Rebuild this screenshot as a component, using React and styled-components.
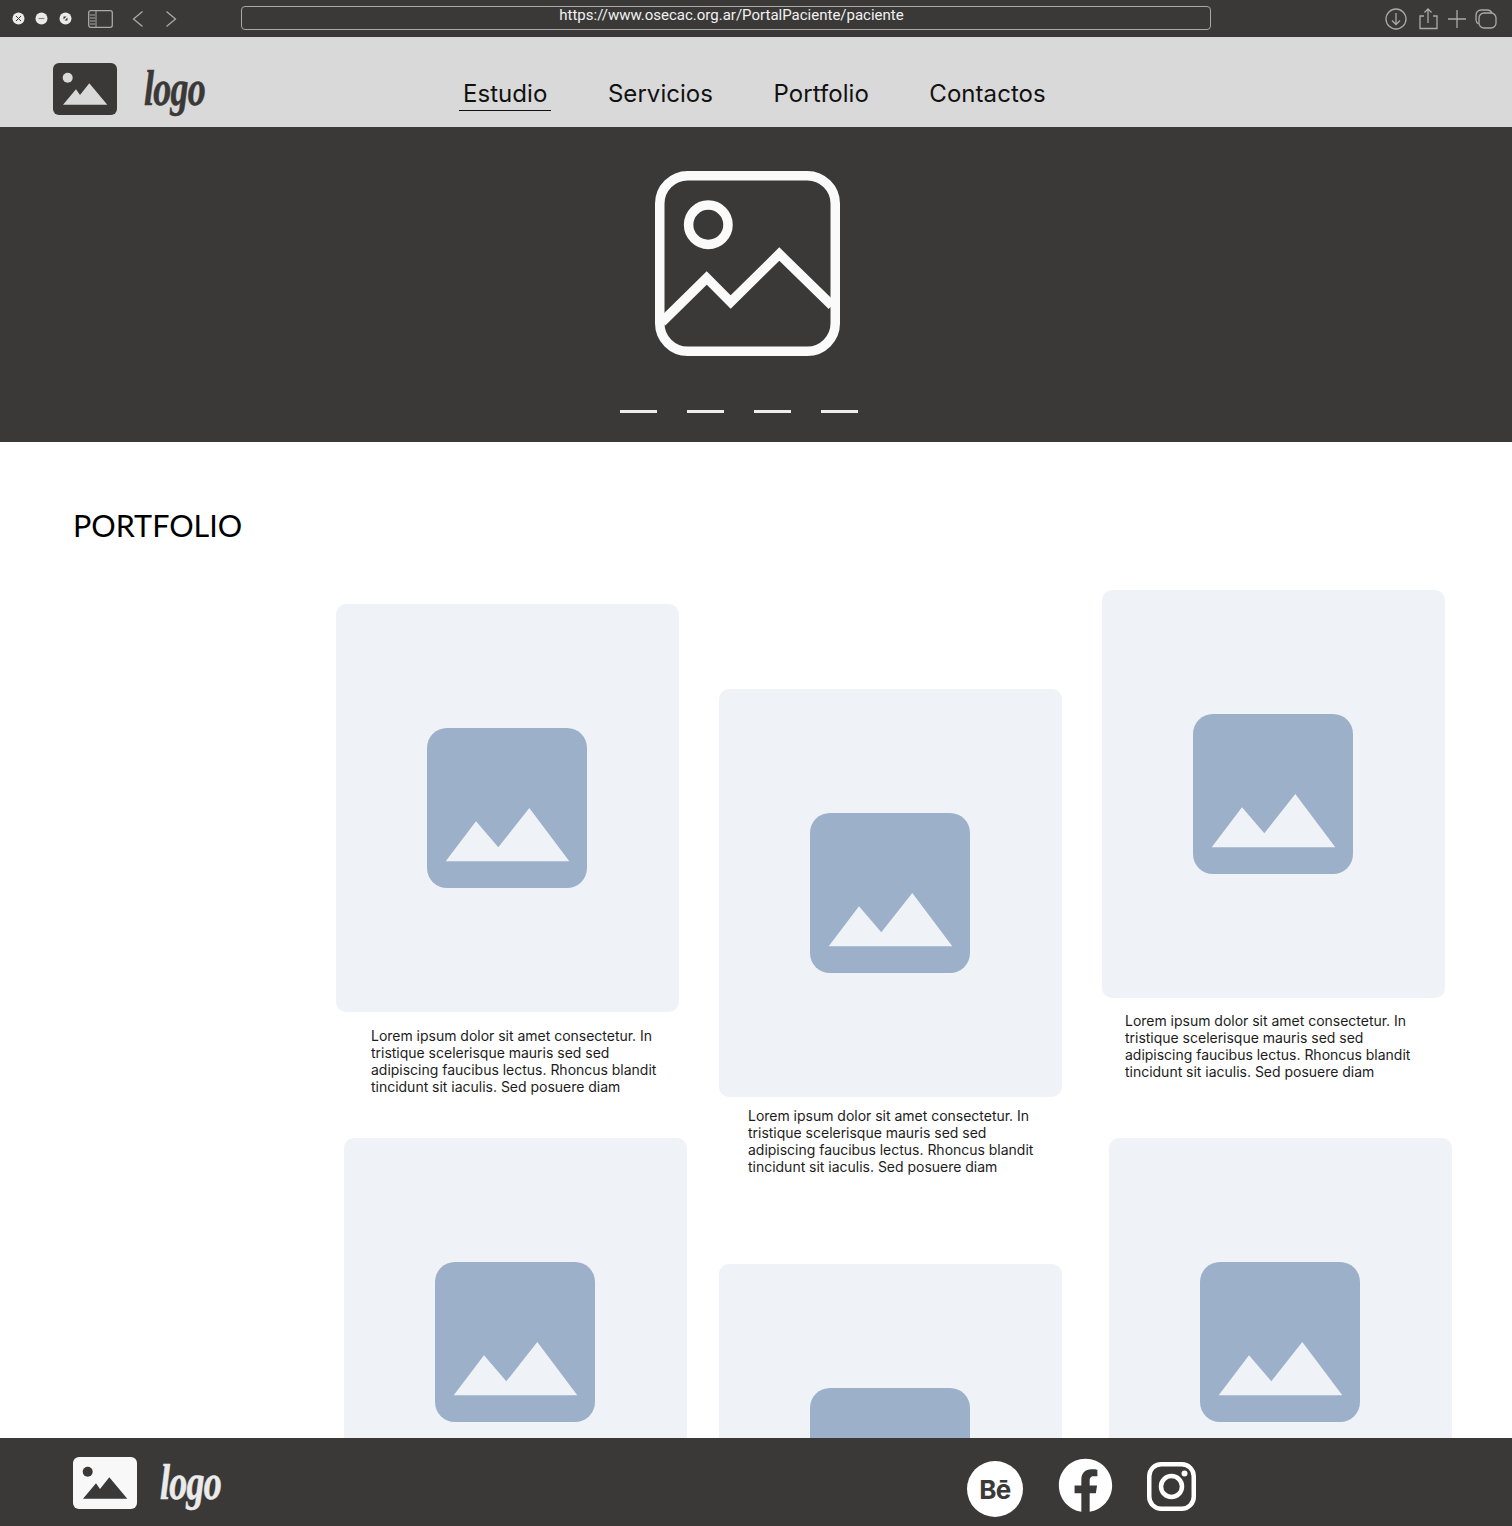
import styled, { createGlobalStyle } from 'styled-components'
import { FaFacebook } from 'react-icons/fa'

const GlobalStyle = createGlobalStyle`
  html, body {
    margin: 0;
    padding: 0;
    background: #fff;
  }
  body {
    font-family: Inter, "Noto Sans", sans-serif;
  }
`

const Page = styled.div`
  width: 1512px;
  height: 1526px;
  display: flex;
  flex-direction: column;
  overflow: hidden;
`

// browser chrome
const BrowserBar = styled.div`
  height: 37px;
  flex: none;
  background: #3a3938;
  display: flex;
  align-items: center;
  padding-left: 12px;
  color: #aaa9a8;
`

const Dots = styled.div`
  display: flex;
  gap: 9.5px;
`

const Dot = styled.svg`
  width: 13px;
  height: 13px;
  display: block;
  margin-left: ${props => props.$left || 0}px;
`

const ChromeIcon = styled.svg`
  display: block;
  flex: none;
  margin-left: ${props => props.$left || 0}px;
  fill: none;
  stroke: currentColor;
  stroke-width: 1.3;
`

const UrlBox = styled.div`
  width: 970px;
  height: 24px;
  box-sizing: border-box;
  margin-left: 64px;
  margin-top: -1px;
  border: 1.5px solid #a9a8a7;
  border-radius: 4px;
  text-align: center;
  padding-left: 11px;
  font-family: Roboto, sans-serif;
  font-size: 15px;
  line-height: 16px;
  color: #f1f1f1;
`

// site header
const Header = styled.header`
  height: 90px;
  flex: none;
  background: #d9d9d9;
  display: flex;
  align-items: flex-start;
  padding-left: 53px;
`

const Brand = styled.div`
  display: flex;
  align-items: flex-start;
  gap: 27px;
  width: 152px;
  flex: none;
  padding-top: 26px;
  color: ${props => props.$color};
`

const BrandMark = styled.svg`
  width: 64px;
  height: 52px;
  display: block;
  flex: none;
`

const BrandName = styled.span`
  font-family: "Liberation Serif", serif;
  font-style: italic;
  font-weight: 700;
  font-size: 50px;
  line-height: 50px;
  letter-spacing: -1px;
  transform: scaleX(0.72);
  transform-origin: left top;
  -webkit-text-stroke: 0.6px currentColor;
`

const Nav = styled.nav`
  display: flex;
  gap: 52.5px;
  margin-left: 254px;
  padding-top: 42px;
`

const NavLink = styled.a`
  display: block;
  padding: 0 4px 2px;
  font-size: 24px;
  line-height: 29px;
  letter-spacing: 0.05px;
  color: #111;
  text-decoration: none;
  border-bottom: 1px solid ${props => (props.$active ? '#111' : 'transparent')};
`

// hero
const Hero = styled.section`
  height: 315px;
  flex: none;
  box-sizing: border-box;
  background: #3a3938;
  padding: 44px 17px 0 0;
  display: flex;
  flex-direction: column;
  align-items: center;
`

const HeroIcon = styled.svg`
  width: 185px;
  height: 185px;
  display: block;
  fill: none;
  stroke: #fafafa;
  stroke-width: 9.5;
  stroke-linejoin: miter;
`

const Pager = styled.div`
  display: flex;
  gap: 30px;
  margin-top: 54px;
  margin-left: -17px;
`

const PagerDash = styled.span`
  width: 37px;
  height: 3px;
  background: #efeeec;
`

// portfolio
const Main = styled.main`
  flex: 1;
  min-height: 0;
  overflow: hidden;
  background: #fff;
`

const Title = styled.h1`
  margin: 0;
  padding: 63px 0 0 73px;
  height: 85px;
  font-family: Lato, sans-serif;
  font-weight: 400;
  font-size: 30.5px;
  line-height: 40px;
  color: #000;
`

const Gallery = styled.div`
  display: flex;
  align-items: flex-start;
  padding-left: 336px;
`

const Column = styled.div`
  display: flex;
  flex-direction: column;
  flex: none;
  width: ${props => props.$width}px;
  margin-top: ${props => props.$top}px;
`

const Item = styled.figure`
  margin: ${props => props.$gap || 0}px 0 0 ${props => props.$shift || 0}px;
`

const Thumb = styled.div`
  width: 343px;
  height: 408px;
  box-sizing: border-box;
  padding-right: 1px;
  border-radius: 10px;
  background: #eff2f7;
  display: flex;
  align-items: center;
  justify-content: center;
`

const ThumbIcon = styled.svg`
  width: 160px;
  height: 160px;
  display: block;
`

const Caption = styled.figcaption`
  width: 300px;
  margin: ${props => props.$top}px 0 0 ${props => props.$left}px;
  font-size: 14px;
  line-height: 17px;
  letter-spacing: -0.015px;
  color: #1c1c1c;
`

// footer
const Footer = styled.footer`
  height: 88px;
  flex: none;
  background: #3a3938;
  display: flex;
  align-items: flex-start;
  padding-left: 73px;
`

const FooterBrand = styled(Brand)`
  padding-top: 19px;
  gap: 23px;
  width: auto;
`

const Socials = styled.div`
  margin-left: auto;
  margin-right: 316px;
  display: flex;
  align-items: flex-start;
  gap: 34.5px;
  color: #fff;
`

const BehanceBadge = styled.a`
  width: 56px;
  height: 56px;
  margin-top: 23px;
  border-radius: 50%;
  background: #fff;
  color: #3a3938;
  display: flex;
  align-items: center;
  justify-content: center;
  font-weight: 700;
  font-size: 26px;
  letter-spacing: -0.5px;
`

const FacebookLink = styled.a`
  display: block;
  margin-top: 20px;
  height: 55px;
  font-size: 55px;
  line-height: 0;
`

const InstagramIcon = styled.svg`
  width: 49px;
  height: 49px;
  margin-top: 24px;
  display: block;
  fill: none;
  stroke: currentColor;
  stroke-width: 4.5;
`

const caption = 'Lorem ipsum dolor sit amet consectetur. In tristique scelerisque mauris sed sed adipiscing faucibus lectus. Rhoncus blandit tincidunt sit iaculis. Sed posuere diam'

const columns = [
  {
    width: 383, top: 14,
    items: [
      { captionTop: 15, captionLeft: 35 },
      { gap: 43, shift: 8 },
    ],
  },
  {
    width: 383, top: 99,
    items: [
      { captionTop: 10, captionLeft: 29 },
      { gap: 89 },
    ],
  },
  {
    width: 350, top: 0,
    items: [
      { captionTop: 14, captionLeft: 23 },
      { gap: 58, shift: 7 },
    ],
  },
]

function Mark({ bg, fg }) {
  return (
    <BrandMark viewBox="0 0 64 52">
      <rect width="64" height="52" rx="6" fill={bg} />
      <circle cx="14.7" cy="14.7" r="5" fill={fg} />
      <polygon points="10,41.7 23,26.3 27,32 36.3,20.3 54.3,41.7" fill={fg} />
    </BrandMark>
  )
}

function Placeholder() {
  return (
    <ThumbIcon viewBox="0 0 160 160">
      <rect width="160" height="160" rx="20" fill="#9cb0ca" />
      <polygon points="18.7,133.3 49,93.3 71.3,119.3 102.3,80 142.3,133.3" fill="#eff2f7" />
    </ThumbIcon>
  )
}

export default function App() {
  return (
    <>
      <GlobalStyle />
      <Page>
        <BrowserBar>
          <Dots>
            <Dot viewBox="0 0 13 13">
              <circle cx="6.5" cy="6.5" r="6" fill="#eaeaea" />
              <path d="M4 4l5 5M9 4l-5 5" stroke="#3a3938" strokeWidth="1" />
            </Dot>
            <Dot viewBox="0 0 13 13">
              <circle cx="6.5" cy="6.5" r="6" fill="#eaeaea" />
              <path d="M3.5 6.5h6" stroke="#8a8988" strokeWidth="1.2" />
            </Dot>
            <Dot viewBox="0 0 13 13" $left={2}>
              <circle cx="6.5" cy="6.5" r="6" fill="#eaeaea" />
              <path d="M4.5 4.5h3l-3 3zM8.5 8.5h-3l3-3z" fill="#3a3938" />
            </Dot>
          </Dots>
          <ChromeIcon $left={16} width="25" height="18" viewBox="0 0 25 18">
            <rect x="0.7" y="0.7" width="23.600" height="16.600" rx="2" />
            <path d="M8 1v16M2 5h5M2 8h5M2 11h5M2 14h5" strokeWidth="1" />
          </ChromeIcon>
          <ChromeIcon $left={19} width="12" height="18" viewBox="0 0 12 18">
            <path d="M10.5 1.5L1.5 9l9 7.5" />
          </ChromeIcon>
          <ChromeIcon $left={21} width="12" height="18" viewBox="0 0 12 18">
            <path d="M1.5 1.5l9 7.5-9 7.5" />
          </ChromeIcon>
          <UrlBox>https://www.osecac.org.ar/PortalPaciente/paciente</UrlBox>
          <ChromeIcon $left={173.5} width="22" height="22" viewBox="0 0 22 22">
            <circle cx="11" cy="11" r="10" />
            <path d="M11 5v11M7 12.5l4 4 4-4" />
          </ChromeIcon>
          <ChromeIcon $left={11.5} width="20" height="22" viewBox="0 0 20 22">
            <path d="M6 8H2v12.500h17V8h-4M10 15V1.500M6.500 4.500L10 1l3.500 3.500" />
          </ChromeIcon>
          <ChromeIcon $left={9} width="20" height="20" viewBox="0 0 20 20">
            <path d="M10 1v18M1 10h18" />
          </ChromeIcon>
          <ChromeIcon $left={7.5} width="22" height="20" viewBox="0 0 22 20">
            <rect x="4" y="4" width="17" height="15" rx="5" />
            <path d="M3.600 15A5 5 0 0 1 1 11V6a5 5 0 0 1 5-5h6.500a5 5 0 0 1 4.500 3" />
          </ChromeIcon>
        </BrowserBar>

        <Header>
          <Brand $color="#3a3938">
            <Mark bg="#3a3938" fg="#d9d9d9" />
            <BrandName>logo</BrandName>
          </Brand>
          <Nav>
            <NavLink href="#" $active>Estudio</NavLink>
            <NavLink href="#">Servicios</NavLink>
            <NavLink href="#">Portfolio</NavLink>
            <NavLink href="#">Contactos</NavLink>
          </Nav>
        </Header>

        <Hero>
          <HeroIcon viewBox="0 0 185 185">
            <rect x="4.750" y="4.750" width="175.500" height="175.500" rx="28" />
            <circle cx="53.300" cy="53.700" r="19.700" />
            <polyline points="7,151 51.700,107 75.700,131 124.300,83 177,134.500" />
          </HeroIcon>
          <Pager>
            <PagerDash />
            <PagerDash />
            <PagerDash />
            <PagerDash />
          </Pager>
        </Hero>

        <Main>
          <Title>PORTFOLIO</Title>
          <Gallery>
            {columns.map((col, i) => (
              <Column key={i} $width={col.width} $top={col.top}>
                {col.items.map((item, j) => (
                  <Item key={j} $gap={item.gap} $shift={item.shift}>
                    <Thumb>
                      <Placeholder />
                    </Thumb>
                    {item.captionTop && (
                      <Caption $top={item.captionTop} $left={item.captionLeft}>{caption}</Caption>
                    )}
                  </Item>
                ))}
              </Column>
            ))}
          </Gallery>
        </Main>

        <Footer>
          <FooterBrand $color="#ebebeb">
            <Mark bg="#f8f8f8" fg="#3a3938" />
            <BrandName>logo</BrandName>
          </FooterBrand>
          <Socials>
            <BehanceBadge>Bē</BehanceBadge>
            <FacebookLink><FaFacebook /></FacebookLink>
            <InstagramIcon viewBox="0 0 49 49">
              <rect x="2.250" y="2.250" width="44.500" height="44.500" rx="12" />
              <circle cx="24.500" cy="24.500" r="10.500" />
              <circle cx="37.500" cy="11.500" r="3" fill="currentColor" stroke="none" />
            </InstagramIcon>
          </Socials>
        </Footer>
      </Page>
    </>
  )
}
